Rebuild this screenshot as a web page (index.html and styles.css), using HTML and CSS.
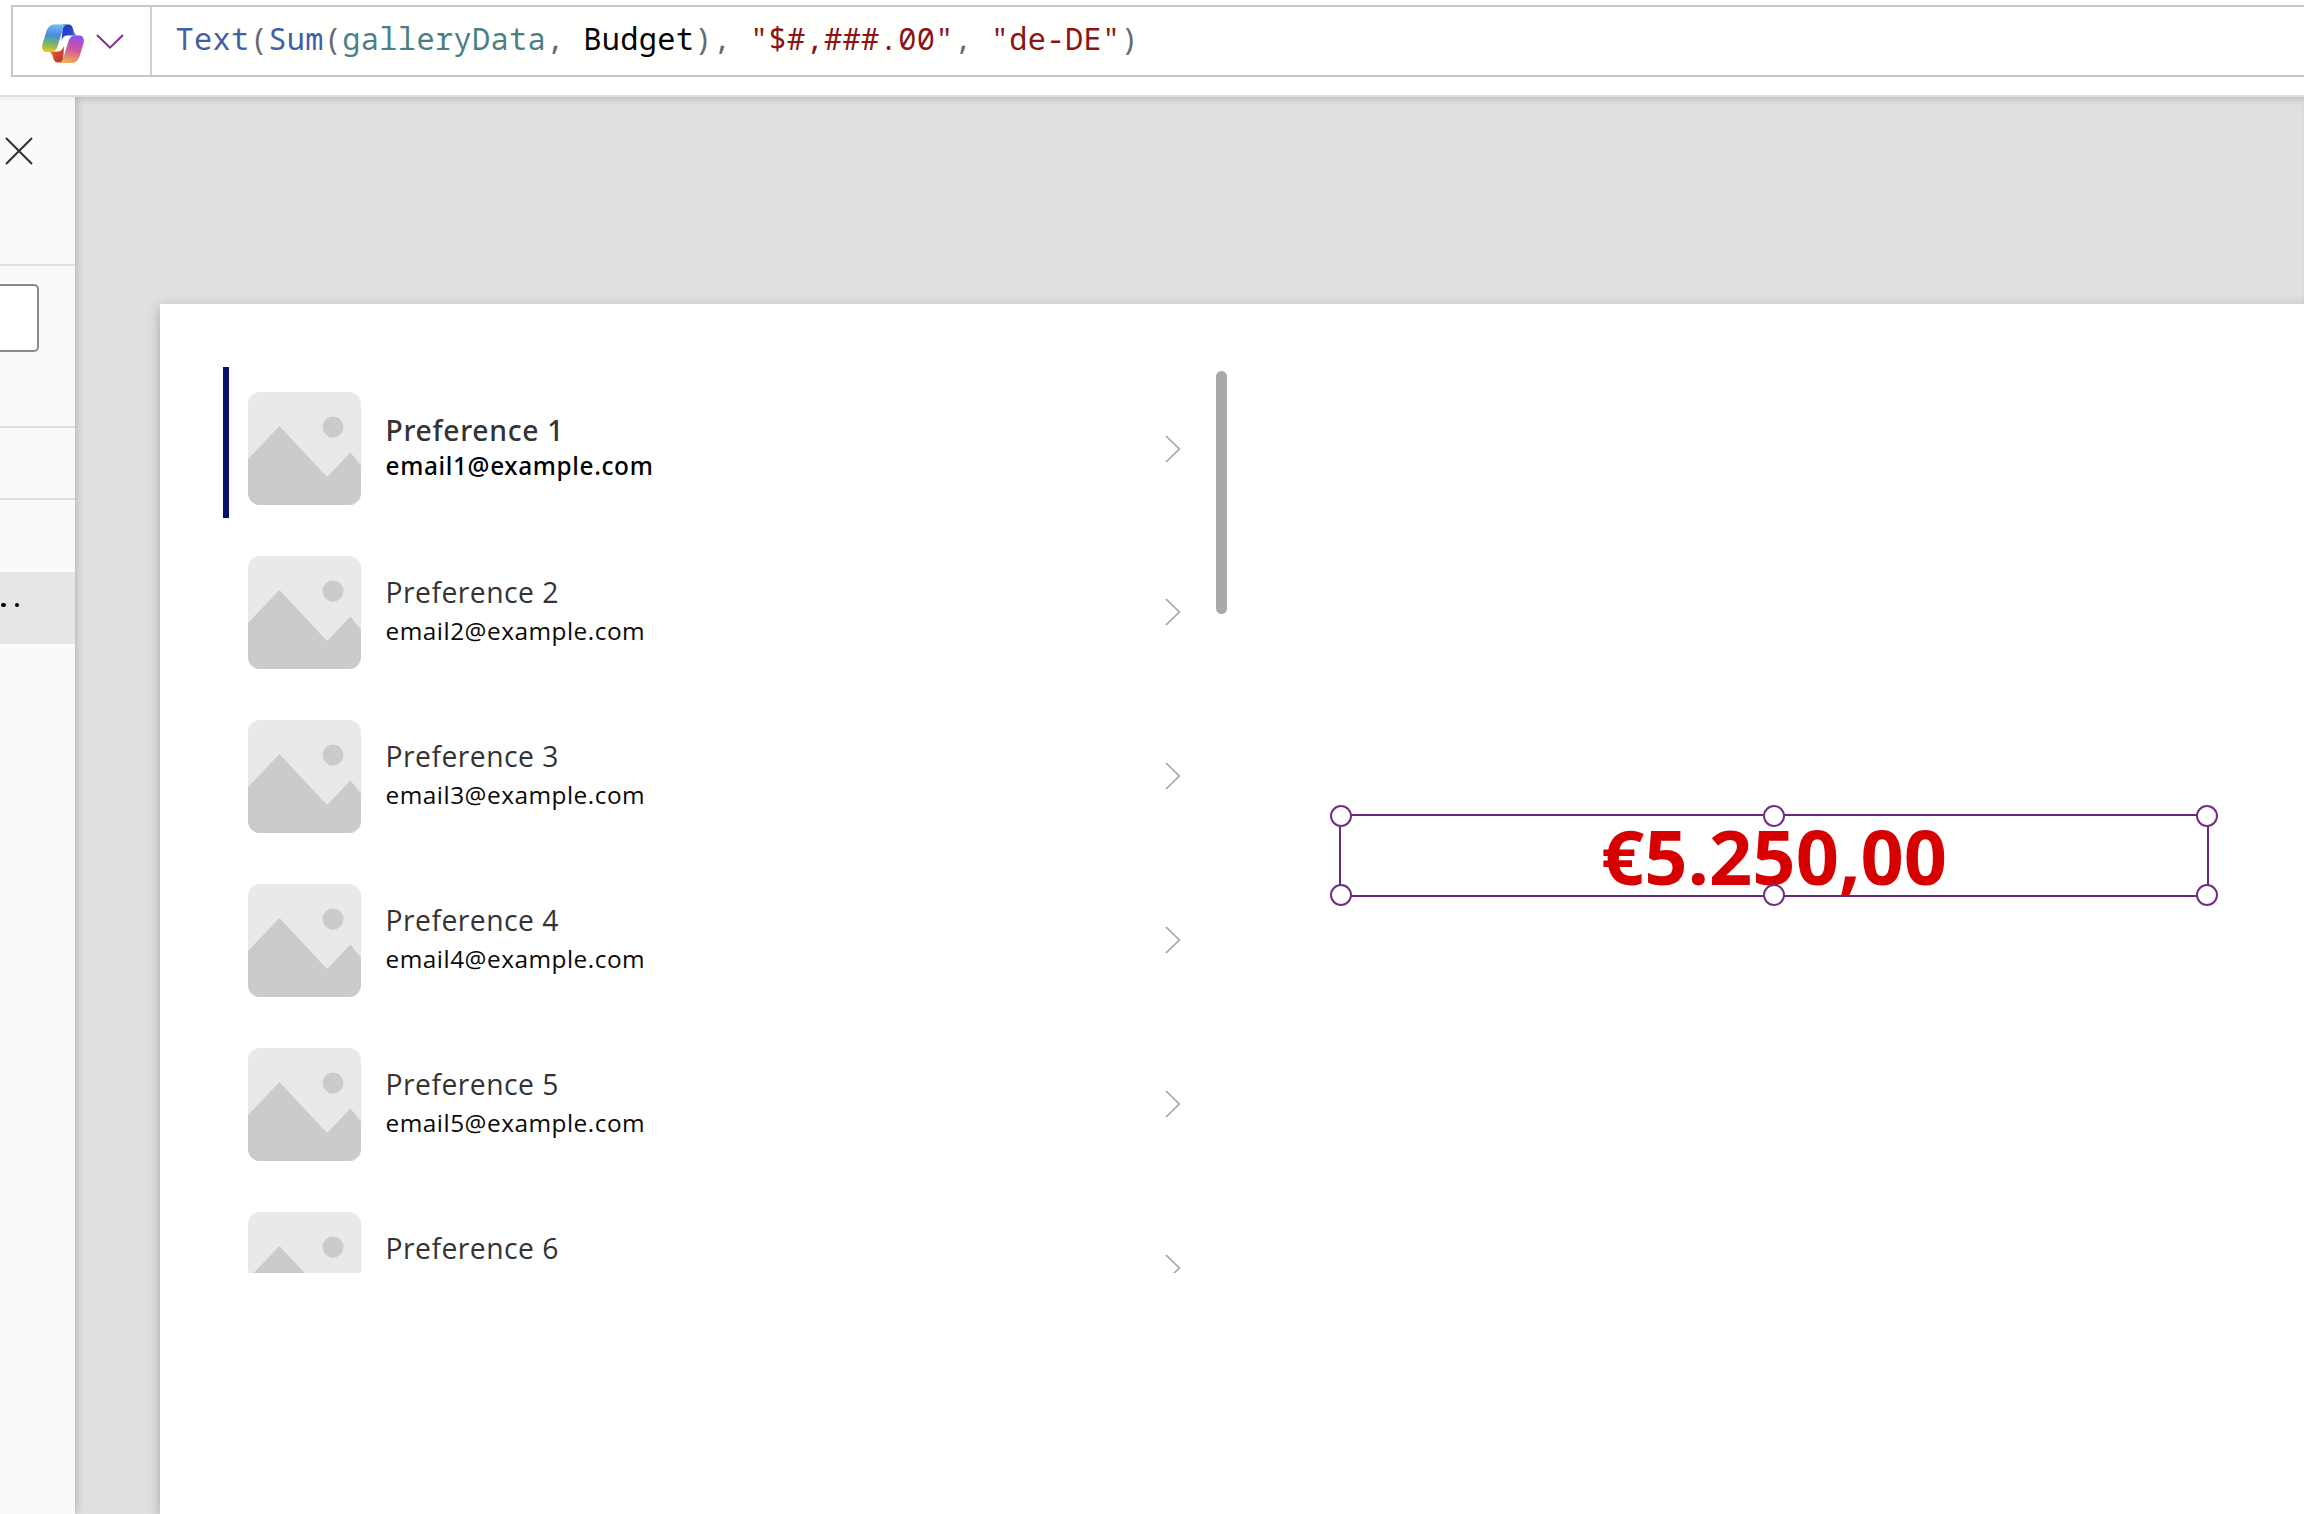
FILE: index.html
```html
<!DOCTYPE html>
<html lang="en">
<head>
<meta charset="utf-8">
<title>App editor</title>
<link rel="stylesheet" href="styles.css">
</head>
<body>
<svg class="defs" aria-hidden="true">
  <symbol id="picture" viewBox="0 0 113 113">
    <rect width="113" height="113" rx="12" fill="#e9e9e9"/>
    <path d="M0 67 31.500 34 79 85 102.500 60.500 113 73.500V101a12 12 0 0 1-12 12H12a12 12 0 0 1-12-12Z" fill="#cbcbca"/>
    <circle cx="85" cy="35" r="10.500" fill="#cbcbca"/>
  </symbol>
  <symbol id="next" viewBox="0 0 16 28">
    <path d="M1 1 14.300 14 1 27" fill="none" stroke="#a6a6a6" stroke-width="1.700"/>
  </symbol>
</svg>
<header class="topbar">
  <div class="formula">
    <div class="copilot">
      <svg class="copilot-logo" viewBox="0 0 42 40">
        <defs>
          <linearGradient id="ga" x1=".1" y1="0" x2="0" y2="1"><stop offset="0" stop-color="#6bb8f5"/><stop offset=".35" stop-color="#4a8be0"/><stop offset=".65" stop-color="#72b36f"/><stop offset="1" stop-color="#f4cb13"/></linearGradient>
          <linearGradient id="gb" x1="0" y1="0" x2="1" y2="1"><stop offset="0" stop-color="#2433b5"/><stop offset=".5" stop-color="#2948cc"/><stop offset="1" stop-color="#56a0ef"/></linearGradient>
          <linearGradient id="gc" x1=".6" y1="0" x2=".4" y2="1"><stop offset="0" stop-color="#9050ea"/><stop offset=".5" stop-color="#d5559a"/><stop offset="1" stop-color="#efb257"/></linearGradient>
          <linearGradient id="gd" x1="0" y1="0" x2="1" y2="1"><stop offset="0" stop-color="#f08b42"/><stop offset=".6" stop-color="#c94432"/><stop offset="1" stop-color="#b93a37"/></linearGradient>
        </defs>
        <path d="M21 .5h5c3.500 0 4.500 2 5.200 5 .7 3.500 1.800 5.500 4.800 6H26c-4 0-5 1.500-6.500 5.500Z" fill="url(#gb)"/>
        <path d="M21 38.500H16c-3 0-4-2-5-5-1-4-2-5.500-5-6h9c4 0 5.500-2 7-5.500Z" fill="url(#gd)"/>
        <path d="M12 .5h14c-3.500 0-5 3.500-6 7.500l-4 13c-1 4-3 7-7 7H5c-4.500 0-5.500-3.500-4.500-8L4 8.500C5.500 3.500 8 .5 12 .5Z" fill="url(#ga)"/>
        <path d="M30 39H16c3.500 0 5-3.500 6-7.500l4-12.500c1-4 3-7.500 7-7.500h4c4.500 0 5.500 3.500 4.500 8L38 31c-1.500 5-4 8-8 8Z" fill="url(#gc)"/>
      </svg>
      <svg class="copilot-caret" viewBox="0 0 28 16"><path d="M1 1 14 13.700 27 1" fill="none" stroke="#812d8e" stroke-width="2"/></svg>
    </div>
    <code class="code"><span class="fn">Text</span>(<span class="fn">Sum</span>(<span class="ref">galleryData</span>, <span class="field">Budget</span>), <span class="str">"$#,###.00"</span>, <span class="str">"de-DE"</span>)</code>
  </div>
</header>
<div class="workspace">
  <aside class="panel">
    <div class="panel-head">
      <svg class="close" viewBox="0 0 28 28"><path d="M1 1 27 27M27 1 1 27" stroke="#303030" stroke-width="2"/></svg>
    </div>
    <div class="panel-search"><div class="search-box"></div></div>
    <div class="panel-row"></div>
    <div class="panel-space"></div>
    <div class="panel-selected"><i class="dot"></i><i class="dot"></i></div>
  </aside>
  <main class="stage">
    <div class="screen">
      <section class="gallery">
        <ul class="list">
          <li class="item selected"><svg class="thumb"><use href="#picture"/></svg><div class="text"><div class="title">Preference 1</div><div class="mail">email1@example.com</div></div><svg class="chevron"><use href="#next"/></svg></li>
          <li class="item"><svg class="thumb"><use href="#picture"/></svg><div class="text"><div class="title">Preference 2</div><div class="mail">email2@example.com</div></div><svg class="chevron"><use href="#next"/></svg></li>
          <li class="item"><svg class="thumb"><use href="#picture"/></svg><div class="text"><div class="title">Preference 3</div><div class="mail">email3@example.com</div></div><svg class="chevron"><use href="#next"/></svg></li>
          <li class="item"><svg class="thumb"><use href="#picture"/></svg><div class="text"><div class="title">Preference 4</div><div class="mail">email4@example.com</div></div><svg class="chevron"><use href="#next"/></svg></li>
          <li class="item"><svg class="thumb"><use href="#picture"/></svg><div class="text"><div class="title">Preference 5</div><div class="mail">email5@example.com</div></div><svg class="chevron"><use href="#next"/></svg></li>
          <li class="item"><svg class="thumb"><use href="#picture"/></svg><div class="text"><div class="title">Preference 6</div></div><svg class="chevron"><use href="#next"/></svg></li>
        </ul>
        <div class="scrollbar"></div>
      </section>
      <section class="label">
        <div class="total">€5.250,00</div>
        <i class="handle top left"></i><i class="handle top center"></i><i class="handle top right"></i>
        <i class="handle bottom left"></i><i class="handle bottom center"></i><i class="handle bottom right"></i>
      </section>
    </div>
  </main>
</div>
</body>
</html>
```
FILE: styles.css
```css
* { box-sizing: border-box; }
body {
  margin: 0;
  height: 1514px;
  overflow: hidden;
  display: flex;
  flex-direction: column;
  background: #fff;
  font-family: "Open Sans", sans-serif;
}
.defs { display: none; }
svg { display: block; flex: none; }

.topbar {
  flex: none;
  height: 97px;
  padding: 5px 0 0 11px;
  border-bottom: 2px solid #dfdfdf;
}
.formula {
  display: flex;
  height: 72px;
  border: 2px solid #c8c8c8;
  border-right: 0;
  background: #fffffd;
}
.copilot {
  display: flex;
  gap: 12px;
  width: 139px;
  padding: 17px 0 0 29px;
  border-right: 2px solid #d0d0d0;
}
.copilot-logo { width: 42px; height: 40px; }
.copilot-caret { width: 28px; height: 16px; margin-top: 10px; }
.code {
  padding-left: 23.500px;
  font: 30.300px/64px "Noto Sans Mono", "DejaVu Sans Mono", monospace;
  letter-spacing: 0.350px;
  white-space: pre;
  color: #666a73;
}
.fn { color: #415fa6; }
.ref { color: #4a7f86; }
.field { color: #000; }
.str { color: #8b1414; }

.workspace {
  flex: 1;
  display: flex;
  min-height: 0;
  box-shadow: inset 0 6px 6px -3px rgba(0, 0, 0, .14);
  background: #e0e0e0;
}
.panel {
  width: 75px;
  background: linear-gradient(#efefef, #fafafa 7px);
  box-shadow: 1px 0 8px rgba(0, 0, 0, .22);
  clip-path: inset(0 -16px 0 0);
}
.panel-head {
  height: 169px;
  padding: 40px 0 0 5px;
  border-bottom: 2px solid #e0e0e0;
}
.close { width: 28px; height: 28px; }
.panel-search {
  height: 162px;
  padding-top: 18px;
  border-bottom: 2px solid #dedede;
}
.search-box {
  width: 39px;
  height: 68px;
  border: 2px solid #8a8a8a;
  border-left: 0;
  border-radius: 0 5px 5px 0;
  background: #fff;
}
.panel-row { height: 72px; border-bottom: 2px solid #dedede; }
.panel-space { height: 72px; }
.panel-selected {
  display: flex;
  align-items: center;
  gap: 9px;
  height: 72px;
  padding: 0 0 6px 1px;
  background: #e6e6e6;
}
.dot { width: 4.500px; height: 4.500px; border-radius: 50%; background: #000; }

.stage { flex: 1; display: flex; padding: 207px 0 0 85px; overflow: hidden; }
.screen {
  flex: 1;
  display: flex;
  align-items: flex-start;
  margin-right: -20px;
  background: #fff;
  box-shadow: 0 4px 12px rgba(0, 0, 0, .26);
}
.gallery {
  display: flex;
  flex: none;
  justify-content: space-between;
  width: 1004px;
  height: 906px;
  margin: 63px 0 0 63px;
  overflow: hidden;
}
.list { width: 970px; margin: 0; padding: 0; list-style: none; }
.item {
  display: flex;
  height: 151px;
  margin-bottom: 12.900px;
  border-left: 6px solid transparent;
  padding-left: 19.200px;
}
.item.selected { border-left-color: #07106b; }
.thumb { width: 113px; height: 113px; margin-top: 25.300px; }
.text { flex: 1; padding: 42.500px 0 0 24.300px; white-space: nowrap; }
.title { font-size: 28.300px; line-height: 38px; letter-spacing: .480px; color: #333; }
.mail { padding-top: 2.500px; font-size: 24.400px; line-height: 33px; letter-spacing: .500px; color: #0a0a0a; }
.selected .text { padding-top: 44px; font-family: "Noto Sans", sans-serif; font-weight: 500; }
.selected .title { letter-spacing: .700px; }
.selected .mail { padding-top: 0; letter-spacing: .650px; color: #000; }
.chevron { width: 16px; height: 28px; margin: 67.500px 12px 0 0; }
.scrollbar { width: 11px; height: 243px; margin-top: 4px; border-radius: 6px; background: #a9a9a9; }

.label {
  position: relative;
  width: 870px;
  height: 83px;
  margin: 510px 0 0 112px;
  border: 2px solid #69297a;
}
.total {
  height: 79px;
  overflow: hidden;
  text-align: center;
  font-size: 75.700px;
  font-weight: 700;
  line-height: 79px;
  color: #d70000;
}
.handle {
  position: absolute;
  width: 22px;
  height: 22px;
  border: 2px solid #703080;
  border-radius: 50%;
  background: #fff;
}
.top { top: -11px; }
.bottom { bottom: -11px; }
.left { left: -11px; }
.center { left: 422px; }
.right { right: -11px; }
```
